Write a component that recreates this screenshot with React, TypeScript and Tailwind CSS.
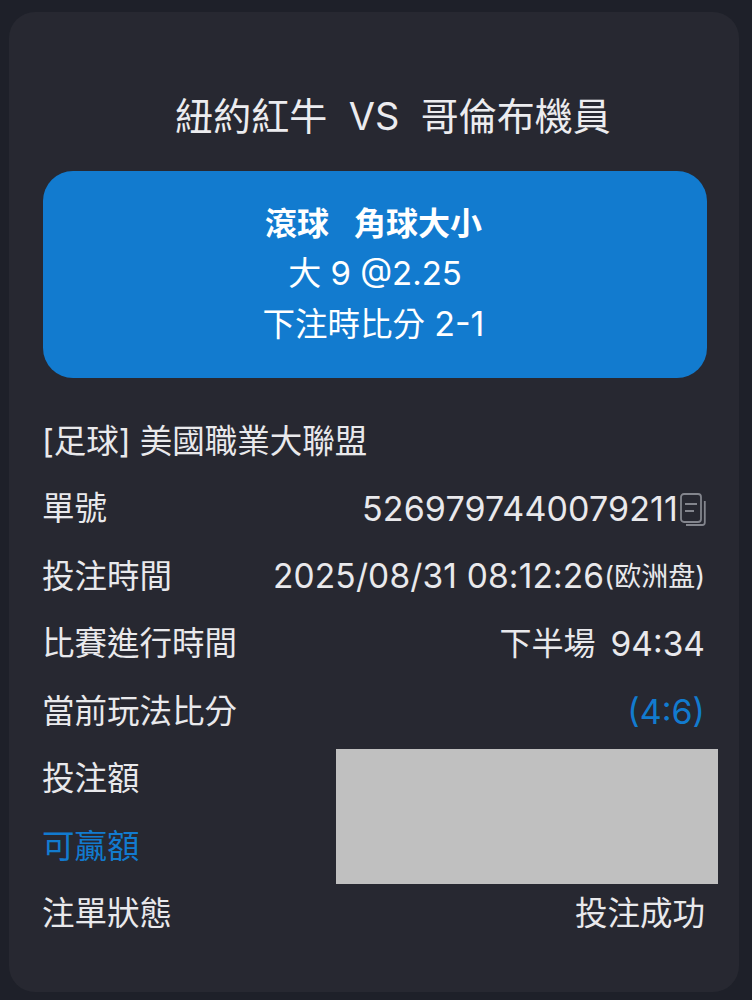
const CopyIcon = () => (
  <svg width="26" height="33" viewBox="0 0 26 33" fill="none" className="-mr-[1px] ml-[2px] shrink-0 text-[#83858d]" stroke="currentColor" strokeWidth="1.8">
    <rect x="1" y="1" width="20" height="28" rx="3" />
    <path d="M5 11h12M5 18h9" />
    <path d="M24.8 8v21.5a2.5 2.5 0 0 1-2.5 2.5H6" />
  </svg>
);

const Row = ({ label, children, labelClass }: { label: string; children?: React.ReactNode; labelClass?: string }) => (
  <div className="flex h-[67.5px] items-center justify-between">
    <span className={labelClass ?? "text-[#e9e9ec]"}>{label}</span>
    {children}
  </div>
);

export default function App() {
  return (
    <div className="h-[1000px] w-[752px] overflow-hidden bg-[#1e2029] px-[9px] pt-[12px] font-['Inter','Noto_Sans_CJK_TC',sans-serif] text-[32.5px] leading-none text-[#e9e9ec]">
      <div className="relative flex h-[980px] w-[730px] flex-col rounded-[26px] bg-[#272831] pl-[34px] pr-[32px]">
        <div className="flex h-[159px] items-end justify-center whitespace-pre pb-[36px] pl-[36px] text-[38px] text-[#ececef]">
          紐約紅牛  VS  哥倫布機員
        </div>
        <div className="flex h-[207px] flex-col items-center justify-center gap-[17px] rounded-[30px] bg-[#127bcf] pr-[3px] text-white">
          <div className="flex gap-[25px] text-[32px] font-bold">
            <span>滾球</span>
            <span>角球大小</span>
          </div>
          <div className="pl-[3px] text-[33px]">大 9 @2.25</div>
          <div>
            下注時比分 <span className="text-[34px]">2-1</span>
          </div>
        </div>
        <div className="-ml-[1px] mt-[30px] pr-[2px]">
          <Row label="[足球] 美國職業大聯盟" />
          <Row label="單號">
            <span className="flex items-center text-[34px] tracking-[0.12px]">
              5269797440079211
              <CopyIcon />
            </span>
          </Row>
          <Row label="投注時間">
            <span className="flex items-center">
              <span className="text-[33.5px] tracking-[0.15px]">2025/08/31 08:12:26</span>
              <span className="text-[27px]">(欧洲盘)</span>
            </span>
          </Row>
          <Row label="比賽進行時間">
            <span className="flex items-center gap-[15px]">
              <span className="text-[32px]">下半場</span>
              <span className="text-[33.5px]">94:34</span>
            </span>
          </Row>
          <Row label="當前玩法比分">
            <span className="text-[34px] text-[#127bcf]">(4:6)</span>
          </Row>
          <Row label="投注額" />
          <Row label="可贏額" labelClass="text-[#127bcf]" />
          <Row label="注單狀態">
            <span>投注成功</span>
          </Row>
        </div>
        <div className="absolute left-[327px] top-[737px] h-[135px] w-[382px] bg-[#c0c0c0]" />
      </div>
    </div>
  );
}
